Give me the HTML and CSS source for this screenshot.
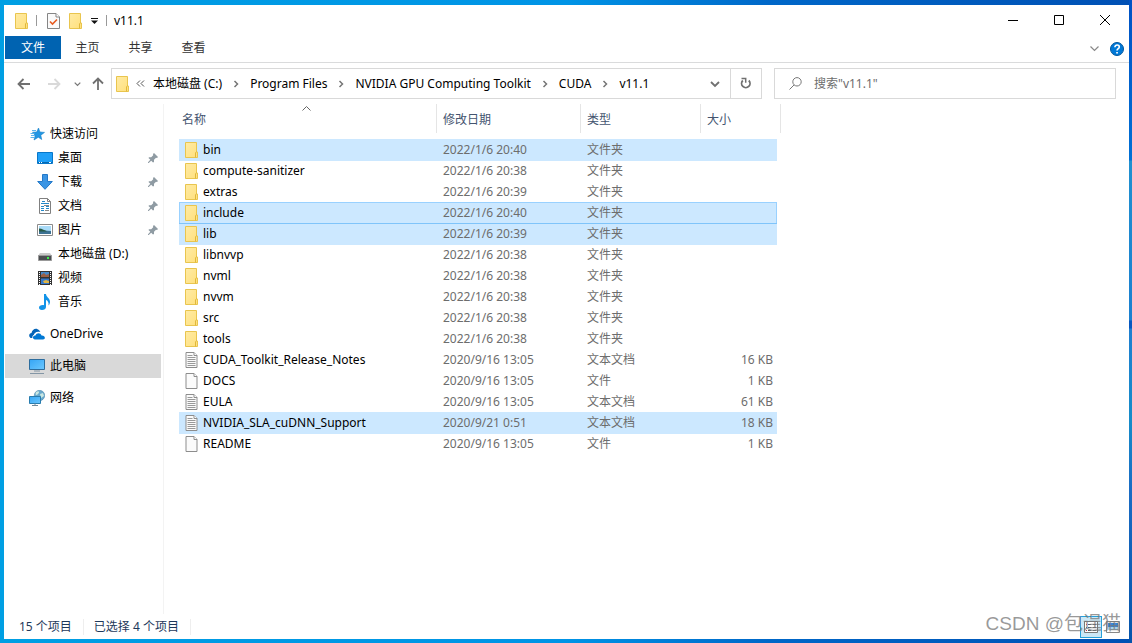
FILE: index.html
```html
<!DOCTYPE html>
<html lang="zh-CN">
<head>
<meta charset="utf-8">
<title>v11.1</title>
<link rel="stylesheet" href="styles.css">
</head>
<body>
<svg class="sprite" aria-hidden="true">
  <defs>
    <linearGradient id="gold" x1="0" y1="0" x2="1" y2="1"><stop offset="0" stop-color="#ffeba5"/><stop offset="1" stop-color="#ffe07c"/></linearGradient>
    <linearGradient id="blue" x1="0" y1="0" x2="1" y2="1"><stop offset="0" stop-color="#35a5f5"/><stop offset="1" stop-color="#6cc8ff"/></linearGradient>
  </defs>
  <symbol id="folder" viewBox="0 0 13 16"><path d="M.5.5h11v9.500h1v5.500H.5z" fill="url(#gold)" stroke="#e9c54e"/><path d="M10.500 15.500v-4.500l1-1.500" fill="none" stroke="#e0b83c"/></symbol>
  <symbol id="file" viewBox="0 0 12 16"><path d="M.5.5h8l3 3v12H.5z" fill="#fbfbfb" stroke="#8d8d8d"/><path d="M8.500.5v3h3" fill="#fff" stroke="#8d8d8d"/></symbol>
  <symbol id="text" viewBox="0 0 12 16"><path d="M.5.5h8l3 3v12H.5z" fill="#fbfbfb" stroke="#8d8d8d"/><path d="M8.500.5v3h3" fill="#fff" stroke="#8d8d8d"/><path d="M2 3.500h5M2 5.500h8M2 7.500h8M2 9.500h8M2 11.500h8M2 13.500h8" stroke="#999"/></symbol>
  <symbol id="chev" viewBox="0 0 6 8"><path d="M1.500 1l3 3-3 3" fill="none" stroke="#767676" stroke-width="1.500"/></symbol>
  <symbol id="down" viewBox="0 0 10 8"><path d="M1 2l4 4 4-4" fill="none" stroke="currentColor" stroke-width="1.800"/></symbol>
  <symbol id="pin" viewBox="0 0 10 10"><path d="M6 0l4 4-1 1-1-.2-2 2V9L5 9.500 3.200 7.700.7 9.900 0 9.900V9.200L2.300 6.800.5 5 1 4.200h2.200l2-2L5 1z" fill="#8f9ba3"/></symbol>
</svg>
<div class="window">
  <header class="titlebar">
    <svg class="folder-icon" aria-hidden="true"><use href="#folder"/></svg>
    <i class="rule"></i>
    <button class="quick check" aria-label="属性"><svg width="13" height="16" viewBox="0 0 13 16"><path d="M.5.5h8.500l3.500 3.500v11.500H.5z" fill="#fafafa" stroke="#858585"/><path d="M9 .5V4h3.500" fill="#fff" stroke="#858585"/><path d="M3 8.500l2.500 2.500L10 6.500" fill="none" stroke="#e65a20" stroke-width="1.600"/></svg></button>
    <button class="quick" aria-label="新建文件夹"><svg class="folder-icon"><use href="#folder"/></svg></button>
    <button class="quick" aria-label="自定义快速访问工具栏"><svg width="7" height="7" viewBox="0 0 7 7"><path d="M0 1.500h7" stroke="#111"/><path d="M0 3.500h7L3.500 7z" fill="#111"/></svg></button>
    <i class="rule last"></i>
    <h1>v11.1</h1>
    <div class="controls">
      <button aria-label="最小化"><svg width="10" height="10" viewBox="0 0 10 10"><path d="M0 5.500h10" stroke="#000"/></svg></button>
      <button aria-label="最大化"><svg width="10" height="10" viewBox="0 0 10 10"><path d="M.5.5h9v9h-9z" fill="none" stroke="#000"/></svg></button>
      <button aria-label="关闭"><svg width="10" height="10" viewBox="0 0 10 10"><path d="M0 0l10 10M10 0L0 10" stroke="#000"/></svg></button>
    </div>
  </header>
  <nav class="tabs" aria-label="功能区">
    <button class="tab active">文件</button><button class="tab">主页</button><button class="tab">共享</button><button class="tab">查看</button>
    <div class="tab-tools">
      <button class="expand" aria-label="展开功能区"><svg width="9" height="6" viewBox="0 0 9 6"><path d="M.5.5l4 4 4-4" fill="none" stroke="#888" stroke-width="1.200"/></svg></button>
      <button aria-label="帮助"><svg width="14" height="14" viewBox="0 0 14 14"><circle cx="7" cy="7" r="6.500" fill="#0078d7" stroke="#00569c"/><path d="M4.900 5.200c0-3 4.400-2.700 4.400-.2C9.300 6.700 7 6.600 7 8.600" fill="none" stroke="#fff" stroke-width="1.600"/><path d="M6.200 10h1.700v1.600H6.200z" fill="#fff"/></svg></button>
    </div>
  </nav>
  <div class="toolbar">
    <div class="history">
      <button aria-label="后退"><svg width="14" height="12" viewBox="0 0 14 12"><path d="M13 6H2M6.500 1L1.500 6l5 5" fill="none" stroke="#707070" stroke-width="1.800"/></svg></button>
      <button aria-label="前进"><svg width="14" height="12" viewBox="0 0 14 12"><path d="M1 6h11M7.500 1l5 5-5 5" fill="none" stroke="#d9d9d9" stroke-width="1.800"/></svg></button>
      <button class="recent" aria-label="最近位置"><svg width="7" height="6"><use href="#down"/></svg></button>
      <button aria-label="上移"><svg width="12" height="13" viewBox="0 0 12 13"><path d="M6 13V2M1 6.500l5-5 5 5" fill="none" stroke="#707070" stroke-width="1.800"/></svg></button>
    </div>
    <div class="address">
      <svg class="folder-icon" aria-hidden="true"><use href="#folder"/></svg>
      <button class="more" aria-label="更多"><svg width="9" height="7" viewBox="0 0 9 7"><path d="M4 .5l-3 3 3 3M8 .5l-3 3 3 3" fill="none" stroke="#555"/></svg></button>
      <a href="#">本地磁盘 (C:)</a><svg class="sep"><use href="#chev"/></svg><a href="#">Program Files</a><svg class="sep"><use href="#chev"/></svg><a href="#">NVIDIA GPU Computing Toolkit</a><svg class="sep"><use href="#chev"/></svg><a href="#">CUDA</a><svg class="sep"><use href="#chev"/></svg><a href="#">v11.1</a>
      <button class="drop" aria-label="以前的位置"><svg width="10" height="8"><use href="#down"/></svg></button>
      <button class="refresh" aria-label="刷新"><svg width="12" height="13" viewBox="0 0 12 13"><path d="M2.800 3.500a4.200 4.200 0 1 0 6 0" fill="none" stroke="#707070" stroke-width="1.800"/><path d="M1.500 1.500h4.200v4.200" fill="none" stroke="#707070" stroke-width="1.500"/></svg></button>
    </div>
    <label class="search">
      <svg width="13" height="13" viewBox="0 0 13 13" aria-hidden="true"><circle cx="8" cy="4.800" r="4.200" fill="none" stroke="#777"/><path d="M5 8L.5 12.500" stroke="#777"/></svg>
      <input type="text" placeholder="搜索&quot;v11.1&quot;" aria-label="搜索v11.1">
    </label>
  </div>
  <div class="body">
    <nav class="sidebar" aria-label="导航窗格">
      <a class="root" href="#"><svg width="16" height="16" viewBox="0 0 16 16"><path d="M9.500 2l1.400 4 4.600.4-3.700 2.800.9 4.300-3.400-2.300L5 14l1.200-4.500L3.500 6.200l4.200-.2z" fill="#2196e3" stroke="#167fc8" stroke-width=".6"/><path d="M3 4.500h4M1.500 7.500h4M2 9.500h4M1.500 11.500h3.500" stroke="#5bb5ed"/></svg><span>快速访问</span></a>
      <a href="#"><svg width="16" height="16" viewBox="0 0 16 16"><path d="M.5 2.500h15v11H.5z" fill="#20a0f8" stroke="#0877c9"/><path d="M1 12.500h14" stroke="#0668b0"/><path d="M2 12.500h1M4 12.500h1M12 12.500h2" stroke="#fff"/></svg><span>桌面</span><svg class="pin"><use href="#pin"/></svg></a>
      <a href="#"><svg width="16" height="16" viewBox="0 0 16 16"><path d="M5.500.5h5v7h4.800L8 15.300.7 7.500h4.800z" fill="#3b95e4" stroke="#2378c8"/></svg><span>下载</span><svg class="pin"><use href="#pin"/></svg></a>
      <a href="#"><svg width="16" height="16" viewBox="0 0 16 16"><path d="M2.500.5h8l3 3v12h-11z" fill="#fff" stroke="#808080"/><path d="M10.500.5v3h3" fill="none" stroke="#808080"/><path d="M5 3.500h3M4 5.500h8M4 8.500h3M9 8.500h3M4 10.500h3M9 10.500h3M4 12.500h3" stroke="#2388c9"/><path d="M8 12.500h4M7 7.500h5" stroke="#888"/></svg><span>文档</span><svg class="pin"><use href="#pin"/></svg></a>
      <a href="#"><svg width="16" height="16" viewBox="0 0 16 16"><path d="M.5 2.500h15v11H.5z" fill="#fff" stroke="#8b8b8b"/><path d="M2 4h12v8H2z" fill="#a9dbf8"/><path d="M2 8c4 0 7 1 12 1v3H2z" fill="#3d7294"/><path d="M2 6.500c3 0 6 2 8 3H2z" fill="#275a46"/></svg><span>图片</span><svg class="pin"><use href="#pin"/></svg></a>
      <a href="#"><svg width="16" height="16" viewBox="0 0 16 16"><path d="M3 7h10l2 3H1z" fill="#c9c9c9"/><path d="M1.500 9.500h13v5h-13z" fill="#4b4e51" stroke="#999"/><path d="M10 12h2" stroke="#3df04b" stroke-width="2"/></svg><span>本地磁盘 (D:)</span></a>
      <a href="#"><svg width="16" height="16" viewBox="0 0 16 16"><path d="M1 1h14v14H1z" fill="#333"/><path d="M4 2h8v5H4z" fill="#468acb"/><path d="M4 8.500h8V14H4z" fill="#3478cb"/><path d="M4 5l3-2 2 2 3-1v3H4z" fill="#9a6045"/><path d="M6 11l3-1 3 1v2H7z" fill="#e0b545"/><path d="M2.500 2v13M13.500 2v13" stroke="#fff" stroke-dasharray="1 1"/></svg><span>视频</span></a>
      <a href="#"><svg width="16" height="16" viewBox="0 0 16 16"><path d="M7 0h2c0 3 4 4 4 8 0 1-.5 2.500-1.500 3.500C12 8 10.500 6.500 9 6v7c0 1.700-1.800 3-4 3s-3-1-3-2.200C2 12 4 10.800 7 11.200z" fill="#1293e8"/></svg><span>音乐</span></a>
      <a class="root gap" href="#"><svg width="16" height="16" viewBox="0 0 16 16"><path d="M1.500 12C-1 10 .5 7 2.500 7 3 4 6 2 8.500 3.200 10 3.500 11 5 11.300 6 7 5 5 7.500 4.800 9 3.500 9.500 3 11 3.500 12z" fill="#0364b8"/><path d="M6 13.500c-3.500-.8-2-4.500.5-4 1-3 5-3 6 0 4-.3 4.300 4 1.500 4z" fill="#0078d4"/></svg><span>OneDrive</span></a>
      <a class="root gap selected" href="#" aria-current="page"><svg width="16" height="16" viewBox="0 0 16 16"><path d="M.5 1.500h15v10H.5z" fill="url(#blue)" stroke="#2d6d9e"/><path d="M5 13h6M1 15.500h14" stroke="#8496a5"/></svg><span>此电脑</span></a>
      <a class="root gap" href="#"><svg width="16" height="16" viewBox="0 0 16 16"><circle cx="10.500" cy="5.500" r="5.200" fill="#6aa9cd" stroke="#518aad" stroke-width=".6"/><path d="M7 2c3-2 4 0 2 2S6 5 7 2M11 4l3-1 1 3-3 2z" fill="#c9e7e2"/><path d="M.5 6.500h11v7H.5z" fill="url(#blue)" stroke="#287cae"/><path d="M3 15.500h6M6 13.500v2" stroke="#71899a"/></svg><span>网络</span></a>
    </nav>
    <main class="content">
      <svg class="sort" width="9" height="5" viewBox="0 0 9 5" aria-hidden="true"><path d="M.5 4.500l4-4 4 4" fill="none" stroke="#666"/></svg>
      <table class="files">
        <colgroup><col class="c-name"><col class="c-date"><col class="c-type"><col class="c-size"><col class="c-end"></colgroup>
        <thead><tr><th>名称</th><th>修改日期</th><th>类型</th><th colspan="2">大小</th></tr></thead>
        <tbody>
          <tr class="picked"><td><svg class="folder-icon"><use href="#folder"/></svg>bin</td><td>2022/1/6 20:40</td><td>文件夹</td><td></td></tr>
          <tr><td><svg class="folder-icon"><use href="#folder"/></svg>compute-sanitizer</td><td>2022/1/6 20:38</td><td>文件夹</td><td></td></tr>
          <tr><td><svg class="folder-icon"><use href="#folder"/></svg>extras</td><td>2022/1/6 20:39</td><td>文件夹</td><td></td></tr>
          <tr class="picked focused"><td><svg class="folder-icon"><use href="#folder"/></svg>include</td><td>2022/1/6 20:40</td><td>文件夹</td><td></td></tr>
          <tr class="picked"><td><svg class="folder-icon"><use href="#folder"/></svg>lib</td><td>2022/1/6 20:39</td><td>文件夹</td><td></td></tr>
          <tr><td><svg class="folder-icon"><use href="#folder"/></svg>libnvvp</td><td>2022/1/6 20:38</td><td>文件夹</td><td></td></tr>
          <tr><td><svg class="folder-icon"><use href="#folder"/></svg>nvml</td><td>2022/1/6 20:38</td><td>文件夹</td><td></td></tr>
          <tr><td><svg class="folder-icon"><use href="#folder"/></svg>nvvm</td><td>2022/1/6 20:38</td><td>文件夹</td><td></td></tr>
          <tr><td><svg class="folder-icon"><use href="#folder"/></svg>src</td><td>2022/1/6 20:38</td><td>文件夹</td><td></td></tr>
          <tr><td><svg class="folder-icon"><use href="#folder"/></svg>tools</td><td>2022/1/6 20:38</td><td>文件夹</td><td></td></tr>
          <tr><td><svg class="folder-icon"><use href="#text"/></svg>CUDA_Toolkit_Release_Notes</td><td>2020/9/16 13:05</td><td>文本文档</td><td>16 KB</td></tr>
          <tr><td><svg class="folder-icon"><use href="#file"/></svg>DOCS</td><td>2020/9/16 13:05</td><td>文件</td><td>1 KB</td></tr>
          <tr><td><svg class="folder-icon"><use href="#text"/></svg>EULA</td><td>2020/9/16 13:05</td><td>文本文档</td><td>61 KB</td></tr>
          <tr class="picked"><td><svg class="folder-icon"><use href="#text"/></svg>NVIDIA_SLA_cuDNN_Support</td><td>2020/9/21 0:51</td><td>文本文档</td><td>18 KB</td></tr>
          <tr><td><svg class="folder-icon"><use href="#file"/></svg>README</td><td>2020/9/16 13:05</td><td>文件</td><td>1 KB</td></tr>
        </tbody>
      </table>
    </main>
  </div>
  <footer class="status">
    <span>15 个项目</span><span>已选择 4 个项目</span>
    <div class="views">
      <button class="on" aria-label="详细信息"><svg width="16" height="14" viewBox="0 0 16 14"><path d="M1.500 1.500h13v11h-13z" fill="#fff" stroke="#777"/><path d="M5 4.500h3M10 4.500h3M5 7.500h3M10 7.500h3M5 10.500h3M10 10.500h3" stroke="#4a5b66"/><path d="M3 4.500h1M3 10.500h1" stroke="#d33"/><path d="M3 7.500h1" stroke="#28c"/></svg></button>
      <button aria-label="大图标"><svg width="14" height="12" viewBox="0 0 14 12"><path d="M.5.5h13v11H.5z" fill="#fff" stroke="#888"/><path d="M2 2h10v4H2z" fill="#3685d9"/><path d="M2 6h10v3H2z" fill="#a9d4ee"/></svg></button>
    </div>
    <div class="watermark">CSDN @包逞猫</div>
  </footer>
</div>
</body>
</html>
```
FILE: styles.css
```css
* { box-sizing: border-box; }
body {
  margin: 0;
  min-height: 100vh;
  padding: 5px 3px 4px 4px;
  display: flex;
  font: 12px/16px "Noto Sans", "Noto Sans CJK SC", sans-serif;
  color: #000;
  background:
    linear-gradient(#0052c4, #0070d5 160px, #2090d0 161px, #1b80d0 320px, #0758c0 321px, #0758c0 328px, #1f7fd0 329px, #168cc9 420px, #1a6cc4 490px, #0554ab) right / 3px 100% no-repeat,
    linear-gradient(90deg, #009fe3, #0094e6 50%, #0067c8 68%, #0050b4);
}
button { padding: 0; border: 0; background: none; font: inherit; color: inherit; display: flex; align-items: center; justify-content: center; }
a { color: inherit; text-decoration: none; }
svg { flex: none; }
.sprite { position: absolute; width: 0; height: 0; }
.folder-icon { width: 13px; height: 16px; }
.window { flex: 1; min-width: 0; display: flex; flex-direction: column; background: #fff; }

.titlebar { height: 31px; padding-left: 11px; display: flex; align-items: center; }
.titlebar h1 { margin: 0 0 0 7px; font-size: 12px; font-weight: 400; }
.rule { width: 1px; height: 11px; margin: 0 10px 0 8px; background: #999; }
.rule.last { margin: 0 0 0 8px; }
.quick { margin-right: 9px; }
.quick:nth-of-type(3) { margin-right: 0; }
.controls { margin-left: auto; padding-right: 1px; display: flex; align-self: stretch; }
.controls button { width: 46px; height: 30px; }

.tabs { height: 27px; padding-left: 1px; display: flex; border-bottom: 1px solid #dadbdc; }
.tab { width: 53px; height: 23px; padding-top: 1px; color: #333; }
.tab.active { width: 56px; color: #fff; background: #0063b1; }
.tab-tools { margin-left: auto; padding-right: 5px; height: 25px; display: flex; align-items: center; gap: 11px; }

.toolbar { display: flex; padding: 5px 13px 5px 0; height: 41px; }
.history { width: 107px; flex: none; padding-left: 13px; display: flex; align-items: center; gap: 16px; color: #777; }
.history .recent { margin: 0 -5px 0 -3px; }
.address { flex: 1; min-width: 0; height: 31px; padding-left: 4px; border: 1px solid #d9d9d9; display: flex; align-items: center; white-space: nowrap; }
.more { margin: 0 8px 0 7px; }
.sep { width: 6px; height: 8px; margin: 0 11px; }
.drop { width: 30px; margin-left: auto; color: #707070; }
.refresh { width: 31px; align-self: stretch; border-left: 1px solid #d9d9d9; }
.search { flex: 0 1 342px; height: 31px; margin-left: 12px; padding-left: 14px; border: 1px solid #d9d9d9; display: flex; align-items: center; gap: 12px; }
.search input { flex: 1; min-width: 0; border: 0; padding: 0; outline: 0; font: inherit; background: none; }
.search input::placeholder { color: #6d6d6d; opacity: 1; }

.body { flex: 1; display: flex; min-height: 0; }
.sidebar { width: 160px; flex: none; padding: 18px 2px 0 1px; border-right: 1px solid #f3f3f3; }
.sidebar a { height: 24px; padding: 0 3px 0 32px; display: flex; align-items: center; gap: 5px; }
.sidebar .root { padding-left: 24px; }
.sidebar .gap { margin-top: 8px; }
.sidebar .selected { background: #d9d9d9; }
.pin { width: 10px; height: 10px; margin-left: auto; }

.content { flex: 1; min-width: 0; padding-left: 15px; position: relative; }
.sort { position: absolute; left: 138px; top: 2px; }
.files { width: 602px; table-layout: fixed; border-collapse: separate; border-spacing: 0; }
.c-name { width: 258px; }
.c-date { width: 144px; }
.c-type { width: 120px; }
.c-size { width: 76px; }
.c-end { width: 4px; }
th { height: 29px; padding: 2px 0 0 6px; text-align: left; font-weight: 400; color: #44546f; border-right: 1px solid #e5e5e5; }
th:first-child { padding-left: 3px; }
tbody::before { content: ""; display: block; height: 6px; }
td { height: 21px; padding: 0 0 0 6px; border-top: 1px solid transparent; color: #6d6d6d; white-space: nowrap; line-height: 16px; }
td:first-child { color: #000; }
td .folder-icon { margin-right: 5px; vertical-align: top; }
td:nth-child(4) { text-align: right; padding-right: 4px; }
.picked td { background: #cce8ff; box-shadow: 0 1px #cce8ff; }
.focused { position: relative; z-index: 1; }
.focused td { border-top-color: #99d1ff; box-shadow: 0 1px #7fc4fa; }
.focused td:first-child { border-left: 1px solid #99d1ff; padding-left: 5px; }
.focused td:nth-child(4) { border-right: 1px solid #99d1ff; }

.status { position: relative; height: 25px; padding: 0 9px 0 15px; display: flex; align-items: center; color: #1e395b; }
.status span { padding-right: 11px; margin-right: 10px; border-right: 1px solid #eee; }
.views { margin-left: auto; display: flex; gap: 4px; }
.views button { height: 22px; }
.views .on { width: 22px; background: #cce8f6; border: 1px solid #26a0da; }
.watermark { position: absolute; right: 8px; bottom: 1px; font: 19px/28px "Liberation Sans", "Noto Sans CJK SC", sans-serif; color: rgba(120, 120, 120, .75); pointer-events: none; }
```
